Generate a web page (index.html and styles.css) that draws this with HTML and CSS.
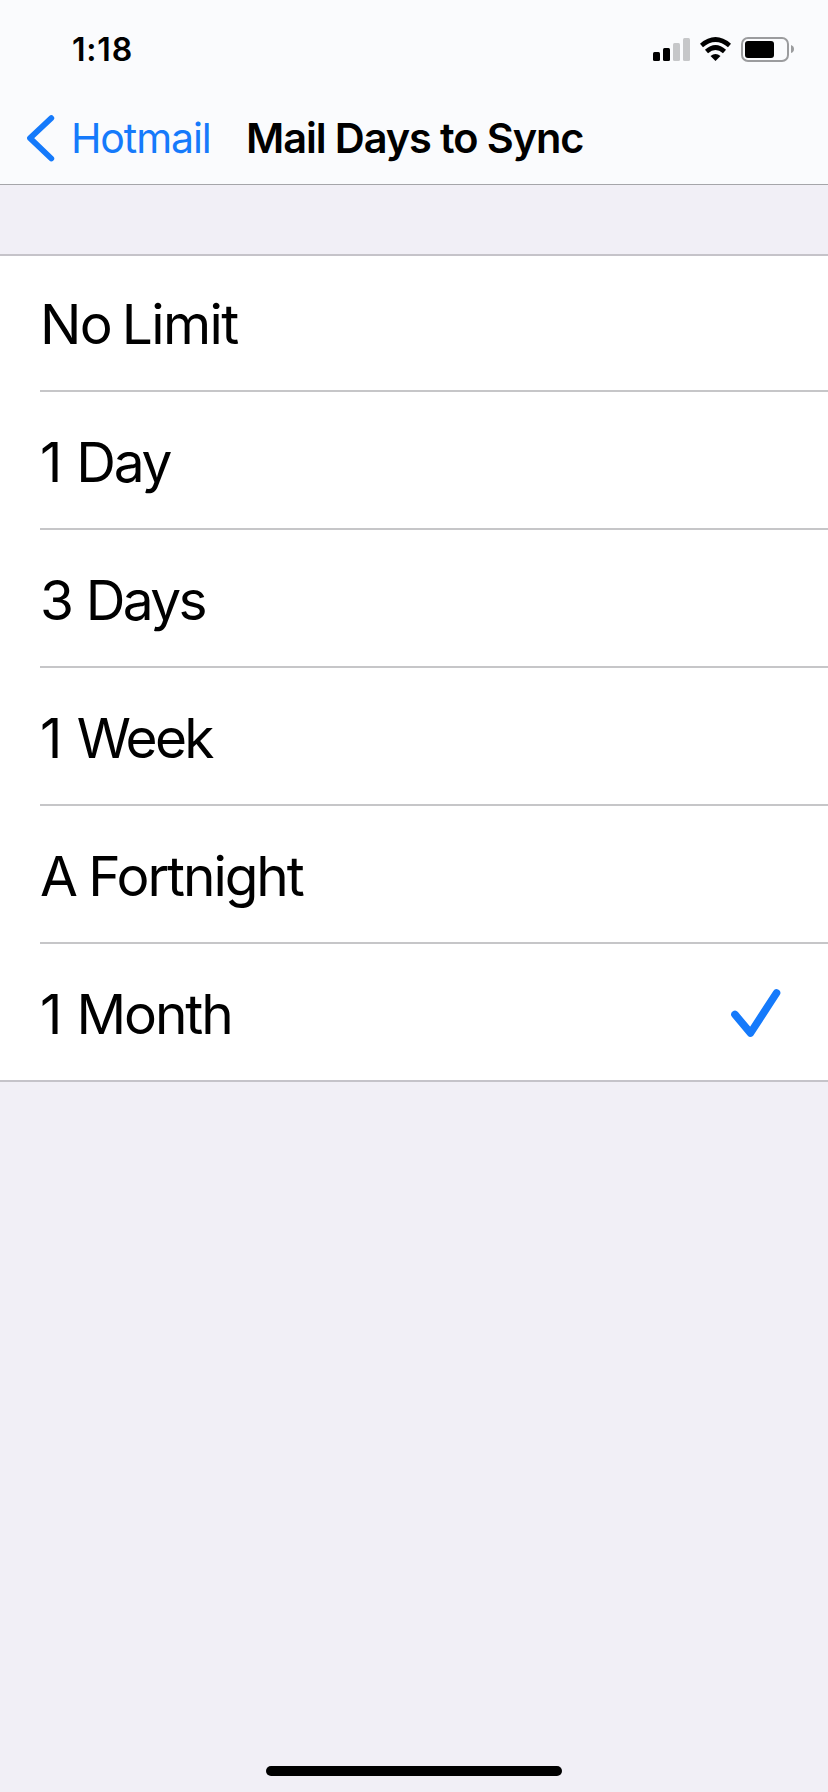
FILE: index.html
```html
<!DOCTYPE html>
<html lang="en">
<head>
<meta charset="utf-8">
<title>Mail Days to Sync</title>
<link rel="stylesheet" href="styles.css">
</head>
<body>
<div class="screen">
  <header class="header">
    <div class="status">
      <span class="time">1:18</span>
      <svg class="status-icons" width="144" height="28" viewBox="0 0 144 28">
        <rect x="1" y="17" width="7" height="9" rx="1.5"/>
        <rect x="11" y="13" width="7" height="13" rx="1.5"/>
        <g fill="#c6c7c9"><rect x="21" y="8" width="7" height="18" rx="1.5"/><rect x="31" y="3" width="7" height="23" rx="1.5"/></g>
        <g fill="none" stroke="#000" stroke-width="4.6"><path d="M49.500 10.500Q63.500 -1.500 77.500 10.500"/><path d="M54.500 16.500Q63.500 8.500 72.500 16.500"/></g>
        <path d="M58.500 21Q63.500 17 68.500 21L63.500 26Z"/>
        <rect x="90" y="3" width="46" height="23" rx="6" fill="none" stroke="#9b9c9e" stroke-width="2"/>
        <rect x="93" y="6" width="29" height="17" rx="3"/>
        <path d="M139 10Q142 11 142 14Q142 17 139 18Z" fill="#9b9c9e"/>
      </svg>
    </div>
    <nav class="nav">
      <svg class="chevron" width="32" height="50" viewBox="0 0 32 50"><path d="M26.300 5.200L5 25.200L26.300 45.500"/></svg>
      <a class="back">Hotmail</a>
      <h1 class="title">Mail Days to Sync</h1>
    </nav>
  </header>
  <ul class="list">
    <li class="row"><span class="label no-limit">No Limit</span></li>
    <li class="row"><span class="label">1 Day</span></li>
    <li class="row"><span class="label three-days">3 Days</span></li>
    <li class="row"><span class="label week">1 Week</span></li>
    <li class="row"><span class="label fortnight">A Fortnight</span></li>
    <li class="row"><span class="label month">1 Month</span>
      <svg class="check" width="52" height="52" viewBox="0 0 52 52"><path d="M5 28.500L20.500 47L46.500 7"/></svg></li>
  </ul>
  <div class="home"></div>
</div>
</body>
</html>
```
FILE: styles.css
```css
* { box-sizing: border-box; }
body { margin: 0; font-family: Inter, "Liberation Sans", sans-serif; color: #000; }
.screen { height: 1792px; display: flex; flex-direction: column; background: #f1eff6; overflow: hidden; }
.header { height: 185px; background: #fafbfd; border-bottom: 1px solid #a5a5a9; }
.status { height: 92px; display: flex; justify-content: space-between; padding: 35px 32px 0 72px; }
.time { font-size: 32px; line-height: 30px; font-weight: 600; letter-spacing: 0.8px; }
.nav { height: 91px; display: flex; align-items: center; padding-left: 25px; }
.chevron path { fill: none; stroke: #157afb; stroke-width: 5.8; stroke-linecap: round; stroke-linejoin: round; }
.back { margin-left: 14px; width: 175px; font-size: 41px; letter-spacing: -1.1px; color: #157afb; white-space: nowrap; }
.title { margin: 0; font-size: 41.5px; font-weight: 600; letter-spacing: -1.1px; white-space: nowrap; }
.list { list-style: none; margin: 69px 0 0; padding: 0 0 0 40px; background: #fff; border-top: 2px solid #c5c3c9; border-bottom: 2px solid #c5c3c9; }
.row { height: 138px; display: flex; align-items: center; justify-content: space-between; padding-right: 46px; border-bottom: 2px solid #c6c6c8; }
.row:first-child { height: 136px; }
.row:last-child { height: 136px; border-bottom: 0; }
.label { padding-top: 3px; font-size: 55px; letter-spacing: -2.2px; word-spacing: 2.8px; white-space: nowrap; }
.no-limit { padding-top: 1px; letter-spacing: -1.6px; word-spacing: -3.3px; }
.three-days { letter-spacing: -2.6px; word-spacing: 1.5px; }
.week { letter-spacing: -2.6px; word-spacing: 4px; }
.fortnight { letter-spacing: -2.05px; word-spacing: -1px; }
.month { letter-spacing: -2.1px; word-spacing: 2.8px; }
.check path { fill: none; stroke: #157afb; stroke-width: 7.6; stroke-linecap: round; stroke-linejoin: round; }
.home { width: 296px; height: 10px; border-radius: 5px; background: #000; margin: auto auto 16px; }
```
